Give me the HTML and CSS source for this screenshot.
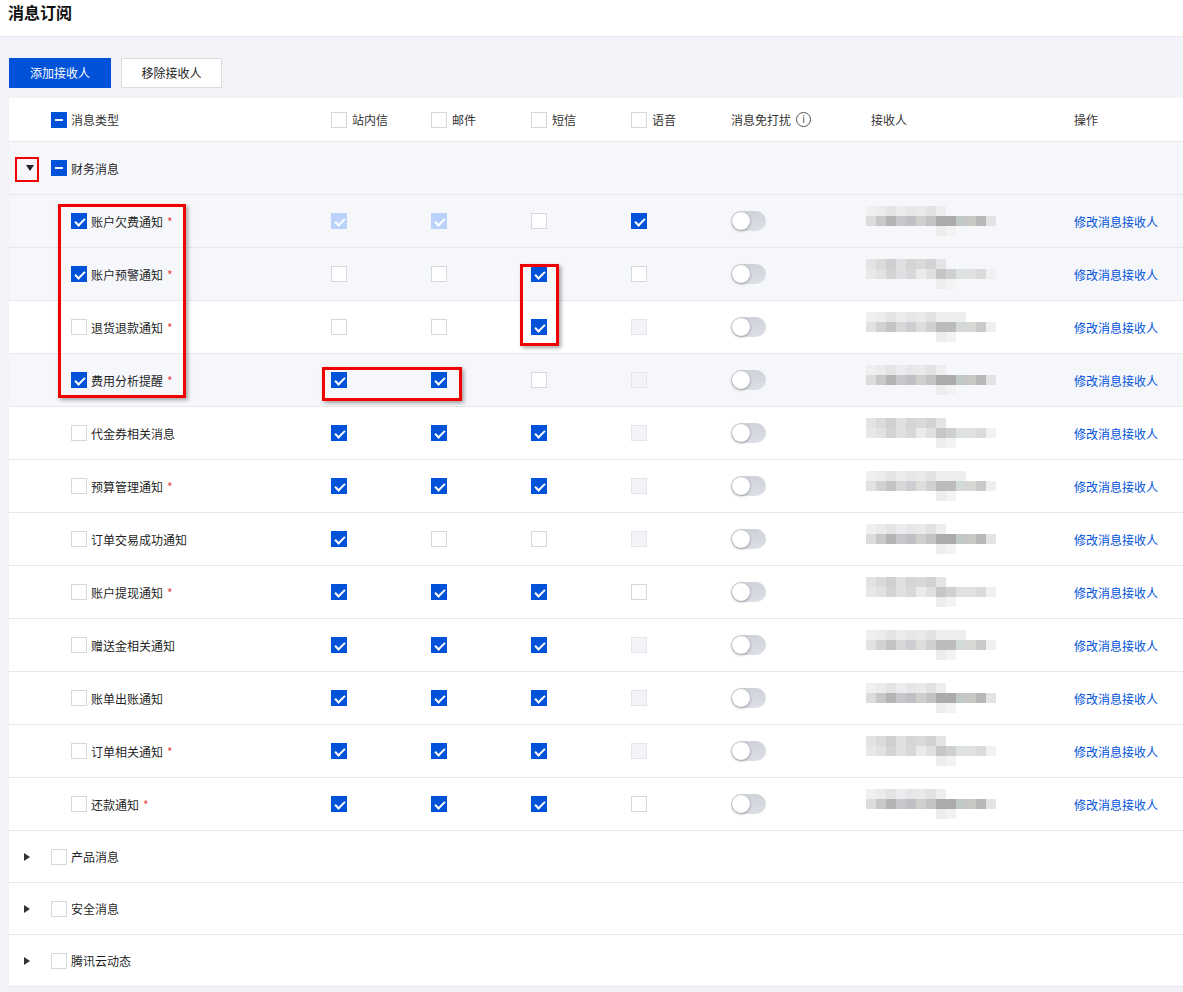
FILE: index.html
```html
<!DOCTYPE html>
<html lang="zh">
<head>
<meta charset="utf-8">
<title>消息订阅</title>
<link rel="stylesheet" href="styles.css">
</head>
<body>
<header class="topbar"><h1 class="title">消息订阅</h1></header>
<main class="main">
  <div class="toolbar">
    <button class="btn btn-primary">添加接收人</button>
    <button class="btn btn-default">移除接收人</button>
  </div>
  <section class="card">
    <div class="row row-head">
      <div class="c-name pad-group"><span class="cb ind"></span><span class="lbl">消息类型</span></div>
      <div class="c-ch"><span class="cb"></span><span class="lbl">站内信</span></div>
      <div class="c-ch"><span class="cb"></span><span class="lbl">邮件</span></div>
      <div class="c-ch"><span class="cb"></span><span class="lbl">短信</span></div>
      <div class="c-ch"><span class="cb"></span><span class="lbl">语音</span></div>
      <div class="c-ch">消息免打扰<span class="info">i</span></div>
      <div>接收人</div>
      <div>操作</div>
    </div>

    <div class="row row-group hl">
      <div class="c-name"><span class="arrow-cell"><span class="tri-down"></span></span><span class="cb ind"></span><span class="lbl">财务消息</span></div>
    </div>

    <div class="row row-item hl">
      <div class="c-name pad-item"><span class="cb on"></span><span class="lbl">账户欠费通知</span><span class="req">*</span></div>
      <div><span class="cb dis-on"></span></div>
      <div><span class="cb dis-on"></span></div>
      <div><span class="cb"></span></div>
      <div><span class="cb on"></span></div>
      <div><span class="sw"></span></div>
      <div><span class="blur b1"><i class="s1"></i><i class="s2"></i><i class="s3"></i></span></div>
      <div><a class="link">修改消息接收人</a></div>
    </div>

    <div class="row row-item hl">
      <div class="c-name pad-item"><span class="cb on"></span><span class="lbl">账户预警通知</span><span class="req">*</span></div>
      <div><span class="cb"></span></div>
      <div><span class="cb"></span></div>
      <div><span class="cb on"></span></div>
      <div><span class="cb"></span></div>
      <div><span class="sw"></span></div>
      <div><span class="blur b2"><i class="s1"></i><i class="s2"></i><i class="s3"></i></span></div>
      <div><a class="link">修改消息接收人</a></div>
    </div>

    <div class="row row-item">
      <div class="c-name pad-item"><span class="cb"></span><span class="lbl">退货退款通知</span><span class="req">*</span></div>
      <div><span class="cb"></span></div>
      <div><span class="cb"></span></div>
      <div><span class="cb on"></span></div>
      <div><span class="cb dis"></span></div>
      <div><span class="sw"></span></div>
      <div><span class="blur b3"><i class="s1"></i><i class="s2"></i><i class="s3"></i></span></div>
      <div><a class="link">修改消息接收人</a></div>
    </div>

    <div class="row row-item hl">
      <div class="c-name pad-item"><span class="cb on"></span><span class="lbl">费用分析提醒</span><span class="req">*</span></div>
      <div><span class="cb on"></span></div>
      <div><span class="cb on"></span></div>
      <div><span class="cb"></span></div>
      <div><span class="cb dis"></span></div>
      <div><span class="sw"></span></div>
      <div><span class="blur b1"><i class="s1"></i><i class="s2"></i><i class="s3"></i></span></div>
      <div><a class="link">修改消息接收人</a></div>
    </div>

    <div class="row row-item">
      <div class="c-name pad-item"><span class="cb"></span><span class="lbl">代金券相关消息</span></div>
      <div><span class="cb on"></span></div>
      <div><span class="cb on"></span></div>
      <div><span class="cb on"></span></div>
      <div><span class="cb dis"></span></div>
      <div><span class="sw"></span></div>
      <div><span class="blur b2"><i class="s1"></i><i class="s2"></i><i class="s3"></i></span></div>
      <div><a class="link">修改消息接收人</a></div>
    </div>

    <div class="row row-item">
      <div class="c-name pad-item"><span class="cb"></span><span class="lbl">预算管理通知</span><span class="req">*</span></div>
      <div><span class="cb on"></span></div>
      <div><span class="cb on"></span></div>
      <div><span class="cb on"></span></div>
      <div><span class="cb dis"></span></div>
      <div><span class="sw"></span></div>
      <div><span class="blur b3"><i class="s1"></i><i class="s2"></i><i class="s3"></i></span></div>
      <div><a class="link">修改消息接收人</a></div>
    </div>

    <div class="row row-item">
      <div class="c-name pad-item"><span class="cb"></span><span class="lbl">订单交易成功通知</span></div>
      <div><span class="cb on"></span></div>
      <div><span class="cb"></span></div>
      <div><span class="cb"></span></div>
      <div><span class="cb dis"></span></div>
      <div><span class="sw"></span></div>
      <div><span class="blur b1"><i class="s1"></i><i class="s2"></i><i class="s3"></i></span></div>
      <div><a class="link">修改消息接收人</a></div>
    </div>

    <div class="row row-item">
      <div class="c-name pad-item"><span class="cb"></span><span class="lbl">账户提现通知</span><span class="req">*</span></div>
      <div><span class="cb on"></span></div>
      <div><span class="cb on"></span></div>
      <div><span class="cb on"></span></div>
      <div><span class="cb"></span></div>
      <div><span class="sw"></span></div>
      <div><span class="blur b2"><i class="s1"></i><i class="s2"></i><i class="s3"></i></span></div>
      <div><a class="link">修改消息接收人</a></div>
    </div>

    <div class="row row-item">
      <div class="c-name pad-item"><span class="cb"></span><span class="lbl">赠送金相关通知</span></div>
      <div><span class="cb on"></span></div>
      <div><span class="cb on"></span></div>
      <div><span class="cb on"></span></div>
      <div><span class="cb dis"></span></div>
      <div><span class="sw"></span></div>
      <div><span class="blur b3"><i class="s1"></i><i class="s2"></i><i class="s3"></i></span></div>
      <div><a class="link">修改消息接收人</a></div>
    </div>

    <div class="row row-item">
      <div class="c-name pad-item"><span class="cb"></span><span class="lbl">账单出账通知</span></div>
      <div><span class="cb on"></span></div>
      <div><span class="cb on"></span></div>
      <div><span class="cb on"></span></div>
      <div><span class="cb dis"></span></div>
      <div><span class="sw"></span></div>
      <div><span class="blur b1"><i class="s1"></i><i class="s2"></i><i class="s3"></i></span></div>
      <div><a class="link">修改消息接收人</a></div>
    </div>

    <div class="row row-item">
      <div class="c-name pad-item"><span class="cb"></span><span class="lbl">订单相关通知</span><span class="req">*</span></div>
      <div><span class="cb on"></span></div>
      <div><span class="cb on"></span></div>
      <div><span class="cb on"></span></div>
      <div><span class="cb dis"></span></div>
      <div><span class="sw"></span></div>
      <div><span class="blur b2"><i class="s1"></i><i class="s2"></i><i class="s3"></i></span></div>
      <div><a class="link">修改消息接收人</a></div>
    </div>

    <div class="row row-item">
      <div class="c-name pad-item"><span class="cb"></span><span class="lbl">还款通知</span><span class="req">*</span></div>
      <div><span class="cb on"></span></div>
      <div><span class="cb on"></span></div>
      <div><span class="cb on"></span></div>
      <div><span class="cb"></span></div>
      <div><span class="sw"></span></div>
      <div><span class="blur b1"><i class="s1"></i><i class="s2"></i><i class="s3"></i></span></div>
      <div><a class="link">修改消息接收人</a></div>
    </div>

    <div class="row row-collapsed">
      <div class="c-name"><span class="arrow-cell"><span class="tri-right"></span></span><span class="cb"></span><span class="lbl">产品消息</span></div>
    </div>
    <div class="row row-collapsed">
      <div class="c-name"><span class="arrow-cell"><span class="tri-right"></span></span><span class="cb"></span><span class="lbl">安全消息</span></div>
    </div>
    <div class="row row-collapsed">
      <div class="c-name"><span class="arrow-cell"><span class="tri-right"></span></span><span class="cb"></span><span class="lbl">腾讯云动态</span></div>
    </div>
  </section>
</main>

<div class="mark mark-arrow"></div>
<div class="mark mark-names"></div>
<div class="mark mark-sms"></div>
<div class="mark mark-fee"></div>
</body>
</html>
```

FILE: styles.css
```css
* { box-sizing: border-box; }
html, body { margin: 0; padding: 0; }
body {
  position: relative;
  width: 1183px;
  min-height: 992px;
  background: #f2f3f8;
  font-family: "Noto Sans CJK SC", "Noto Sans", sans-serif;
  font-size: 12px;
  color: rgba(0, 0, 0, 0.9);
  overflow: hidden;
}
.topbar {
  height: 37px;
  background: #fff;
  border-bottom: 1px solid #e9eaef;
  padding-left: 8px;
}
.title {
  margin: 0;
  font-size: 16px;
  line-height: 24px;
  font-weight: 700;
  color: #111;
}
.main { padding: 21px 0 6px 9px; }
.toolbar { display: flex; gap: 10px; margin-bottom: 10px; }
.btn {
  height: 30px;
  font-family: inherit;
  font-size: 12px;
  line-height: 28px;
  padding: 0;
  border-radius: 0;
  cursor: pointer;
}
.btn-primary { width: 102px; background: #0052d9; border: 1px solid #0052d9; color: #fff; }
.btn-default { width: 101px; background: #fff; border: 1px solid #dcdcdc; color: #222; }

.card { background: #fff; }
.row {
  display: grid;
  grid-template-columns: 322px 100px 100px 100px 100px 140px 203px 1fr;
  align-items: center;
  border-bottom: 1px solid #e7e8ed;
}
.row > div { display: flex; align-items: center; }
.row-head { height: 44px; color: #333; }
.row-group, .row-item { height: 53px; }
.row-collapsed { height: 52px; }
.hl { background: #f6f7fb; }
.row-group .c-name, .row-collapsed .c-name { grid-column: 1 / -1; }

.pad-group { padding-left: 42px; }
.pad-item { padding-left: 62px; }
.lbl { margin-left: 4px; }
.c-ch .lbl { margin-left: 5px; }
.req { color: #e54545; margin-left: 4px; }

.arrow-cell {
  width: 42px;
  height: 16px;
  display: flex;
  align-items: center;
  justify-content: center;
}
.tri-down {
  width: 0; height: 0;
  border-left: 4px solid transparent;
  border-right: 4px solid transparent;
  border-top: 6px solid #222;
}
.tri-right {
  width: 0; height: 0;
  border-top: 4px solid transparent;
  border-bottom: 4px solid transparent;
  border-left: 6px solid #333;
  margin-left: -6px;
}

.cb {
  position: relative;
  display: inline-block;
  flex: none;
  width: 16px;
  height: 16px;
  border: 1px solid #d5d8df;
  background: #fff;
}
.cb.on, .cb.ind { background: #0052d9; border-color: #0052d9; }
.cb.dis-on { background: #bbd3fb; border-color: #bbd3fb; }
.cb.dis { background: #f3f4f7; border-color: #e3e5ea; }
.cb.on::after, .cb.dis-on::after {
  content: "";
  position: absolute;
  left: 5px;
  top: 2px;
  width: 4px;
  height: 8px;
  border: solid #fff;
  border-width: 0 2px 2px 0;
  transform: rotate(45deg);
}
.cb.ind::after {
  content: "";
  position: absolute;
  left: 3px;
  top: 6px;
  width: 8px;
  height: 2px;
  background: #fff;
}

.info {
  display: inline-flex;
  align-items: center;
  justify-content: center;
  width: 15px;
  height: 15px;
  margin-left: 5px;
  border: 1.3px solid #555;
  border-radius: 50%;
  font-family: "DejaVu Sans", sans-serif;
  font-size: 10px;
  line-height: 1;
  color: #555;
}

.sw {
  position: relative;
  display: inline-block;
  width: 35px;
  height: 20px;
  border-radius: 10px;
  background: linear-gradient(#cfd2d9, #dcdfe5);
}
.sw::after {
  content: "";
  position: absolute;
  left: 1px;
  top: 1px;
  width: 18px;
  height: 18px;
  border-radius: 50%;
  background: #fff;
  box-shadow: 0 1px 3px rgba(0, 0, 0, 0.35);
}

.blur {
  display: flex;
  flex-direction: column;
  width: 130px;
  height: 30px;
  margin-left: -5px;
}
.blur i { display: block; height: 10px; }
.blur .s1 {
  width: 80px;
  background: linear-gradient(to right,
    #f0eff0 0 10px, #ebebec 10px 20px, #e4e4e6 20px 30px, #ececee 30px 40px,
    #e6e6e8 40px 50px, #e9e9eb 50px 60px, #e2e2e4 60px 70px, #eeeef0 70px 80px);
}
.blur .s2 {
  width: 130px;
  background: linear-gradient(to right,
    #dcdcdc 0 10px, #c8c8ca 10px 20px, #b4b4b6 20px 30px, #c6c7ca 30px 40px,
    #bfc0c3 40px 50px, #d0cfcd 50px 60px, #c3c3c5 60px 70px, #ababae 70px 90px,
    #c2c8c8 90px 100px, #c9c7c4 100px 110px, #b7b8ba 110px 120px, #e2e3e5 120px 130px);
}
.blur .s3 {
  width: 20px;
  margin-left: 70px;
  background: linear-gradient(to right, #ededee 0 10px, #f3f3f4 10px 20px);
}
.b2 .s1 {
  background: linear-gradient(to right,
    #e4e2e2 0 10px, #dadadb 10px 20px, #cfcfd1 20px 30px, #e0e0e2 30px 40px,
    #d6d5d6 40px 50px, #d9d9da 50px 60px, #d2d2d4 60px 70px, #e4e4e6 70px 80px);
}
.b2 .s2 {
  background: linear-gradient(to right,
    #e9e8e7 0 10px, #e2e2e1 10px 20px, #d3d3d3 20px 30px, #dfe0e2 30px 40px,
    #d7d8da 40px 50px, #ebebea 50px 60px, #e0e0e0 60px 70px, #c6c6c8 70px 80px,
    #cfd0d1 80px 90px, #dfe2e2 90px 100px, #e1e1e1 100px 110px, #dadcdc 110px 120px, #f0f1f1 120px 130px);
}
.b3 .s1 { width: 100px; }
.b3 .s2 {
  background: linear-gradient(to right,
    #e2e2e3 0 10px, #d2d2d4 10px 20px, #c4c4c6 20px 30px, #d6d7d9 30px 40px,
    #cdced1 40px 50px, #dedddb 50px 60px, #d0d0d2 60px 70px, #bcbcbf 70px 90px,
    #d3d8d8 90px 100px, #d9d7d4 100px 110px, #c9cacc 110px 120px, #eeeff1 120px 130px);
}

.link { color: #0052d9; cursor: pointer; }

.mark {
  position: absolute;
  border: 3px solid #f20000;
  box-shadow: 2px 2px 4px rgba(0, 0, 0, 0.35);
  pointer-events: none;
}
.mark-arrow { left: 15px; top: 157px; width: 24px; height: 25px; border-width: 2px; box-shadow: none; }
.mark-names { left: 58px; top: 204px; width: 128px; height: 194px; }
.mark-sms { left: 520px; top: 264px; width: 39px; height: 82px; }
.mark-fee { left: 322px; top: 367px; width: 140px; height: 34px; }
```
